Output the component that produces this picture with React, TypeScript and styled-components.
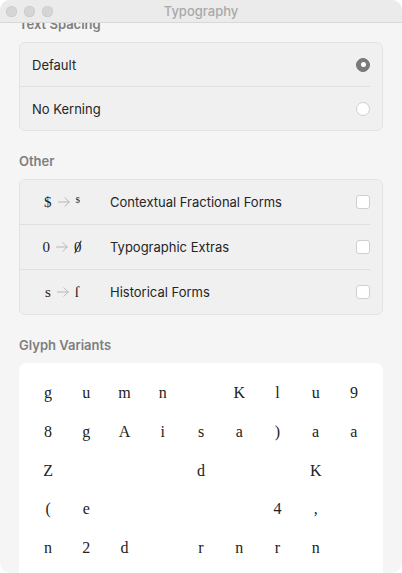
import React from "react";
import styled, { createGlobalStyle } from "styled-components";

const Global = createGlobalStyle`
  html, body { margin: 0; padding: 0; background: #ffffff; }
  body {
    font-family: Inter, "Liberation Sans", sans-serif;
    -webkit-font-smoothing: antialiased;
  }
  * { box-sizing: border-box; }
`;

const Window = styled.div`
  position: relative;
  width: 402px;
  height: 573px;
  border-radius: 10px;
  overflow: hidden;
  background: #f5f5f5;
`;

const TitleBar = styled.div`
  position: absolute;
  top: 0;
  left: 0;
  right: 0;
  height: 23px;
  background: #ebebeb;
  border-bottom: 1px solid #d8d8d8;
  display: grid;
  grid-template-columns: 1fr auto 1fr;
  align-items: center;
  z-index: 2;
`;

const Lights = styled.div`
  display: flex;
  align-items: center;
  gap: 7px;
  padding-left: 6px;
`;

const Light = styled.span`
  width: 11px;
  height: 11px;
  border-radius: 50%;
  background: #d5d5d5;
  box-shadow: inset 0 0 0 0.5px #c8c8c8;
`;

const Title = styled.div`
  font-size: 13px;
  font-weight: 500;
  color: #a9a9a9;
  line-height: 16px;
`;

const Content = styled.div`
  display: flex;
  flex-direction: column;
  padding: 16px 19px 0;
`;

const SectionHeader = styled.div<{ $first?: boolean }>`
  font-size: 13px;
  font-weight: 600;
  line-height: 16px;
  color: #7e7e7e;
  margin: ${(p) => (p.$first ? "0" : "22px")} 0 10px 0;
`;

const Card = styled.div`
  background: #f0f0f0;
  border: 1px solid #e3e3e3;
  border-radius: 6px;
  display: flex;
  flex-direction: column;
`;

const Row = styled.div<{ $h: number }>`
  height: ${(p) => p.$h}px;
  display: flex;
  align-items: center;
  padding: 0 12px;
`;

const Divider = styled.div`
  height: 1px;
  background: #e0e0e0;
  margin-right: 12px;
`;

const Label = styled.span`
  flex: 1;
  font-size: 13px;
  color: #252525;
  line-height: 16px;
`;

const Radio = styled.span<{ $on?: boolean }>`
  width: 14px;
  height: 14px;
  border-radius: 50%;
  display: flex;
  align-items: center;
  justify-content: center;
  background: ${(p) => (p.$on ? "#7a7a7a" : "#ffffff")};
  border: 1px solid ${(p) => (p.$on ? "#767676" : "#d0d0d0")};
  &::after {
    content: "";
    display: ${(p) => (p.$on ? "block" : "none")};
    width: 5px;
    height: 5px;
    border-radius: 50%;
    background: #ffffff;
  }
`;

const Checkbox = styled.span`
  width: 14px;
  height: 14px;
  border-radius: 3px;
  background: #ffffff;
  border: 1px solid #cfcfcf;
`;

const SymbolBox = styled.span`
  width: 60px;
  display: flex;
  align-items: center;
  justify-content: center;
  gap: 6px;
  font-family: "Liberation Serif", "DejaVu Serif", serif;
  font-size: 15px;
  line-height: 18px;
  color: #222222;
  margin-right: 18px;
`;

const ArrowSvg = styled.svg`
  width: 12px;
  height: 10px;
  flex: none;
`;

const Small = styled.span`
  font-size: 9px;
  position: relative;
  top: -2px;
`;

const Slashed = styled.span`
  position: relative;
  &::after {
    content: "";
    position: absolute;
    left: 50%;
    top: 2px;
    bottom: 2px;
    width: 1px;
    background: currentColor;
    transform: translateX(-50%) rotate(28deg);
  }
`;

const GlyphCard = styled.div`
  background: #ffffff;
  border-radius: 8px;
  padding: 11px 10px 30px;
  display: grid;
  grid-template-columns: repeat(9, 1fr);
  grid-auto-rows: 38.7px;
  align-items: center;
  justify-items: center;
  font-family: "Liberation Serif", "DejaVu Serif", serif;
  font-size: 16px;
  color: #222222;
`;

const Glyph = styled.span`
  line-height: 20px;
`;

const Arrow = () => (
  <ArrowSvg viewBox="0 0 12 10" fill="none" stroke="#b6b6b6" strokeWidth="1" strokeLinecap="round" strokeLinejoin="round">
    <path d="M0.5 5H11.2M7 0.8L11.2 5L7 9.2" />
  </ArrowSvg>
);

const glyphRows = ["gumn Klu9", "8gAisa)aa", "Z   d  K ", "(e    4, ", "n2d rnrn "];

const features = [
  { from: "$", to: <Small>$</Small>, label: "Contextual Fractional Forms" },
  { from: "0", to: <Slashed>0</Slashed>, label: "Typographic Extras" },
  { from: "s", to: <span>ſ</span>, label: "Historical Forms" },
];

export default function App() {
  return (
    <>
      <Global />
      <Window>
        <TitleBar>
          <Lights>
            <Light />
            <Light />
            <Light />
          </Lights>
          <Title>Typography</Title>
          <span />
        </TitleBar>
        <Content>
          <SectionHeader $first>Text Spacing</SectionHeader>
          <Card>
            <Row $h={43}>
              <Label>Default</Label>
              <Radio $on />
            </Row>
            <Divider />
            <Row $h={43}>
              <Label>No Kerning</Label>
              <Radio />
            </Row>
          </Card>
          <SectionHeader>Other</SectionHeader>
          <Card>
            {features.map((f, i) => (
              <React.Fragment key={f.label}>
                {i > 0 && <Divider />}
                <Row $h={44}>
                  <SymbolBox>
                    <span>{f.from}</span>
                    <Arrow />
                    {f.to}
                  </SymbolBox>
                  <Label>{f.label}</Label>
                  <Checkbox />
                </Row>
              </React.Fragment>
            ))}
          </Card>
          <SectionHeader>Glyph Variants</SectionHeader>
          <GlyphCard>
            {glyphRows.flatMap((r, ri) =>
              r.split("").map((c, ci) => <Glyph key={`${ri}-${ci}`}>{c === " " ? "" : c}</Glyph>)
            )}
          </GlyphCard>
        </Content>
      </Window>
    </>
  );
}
